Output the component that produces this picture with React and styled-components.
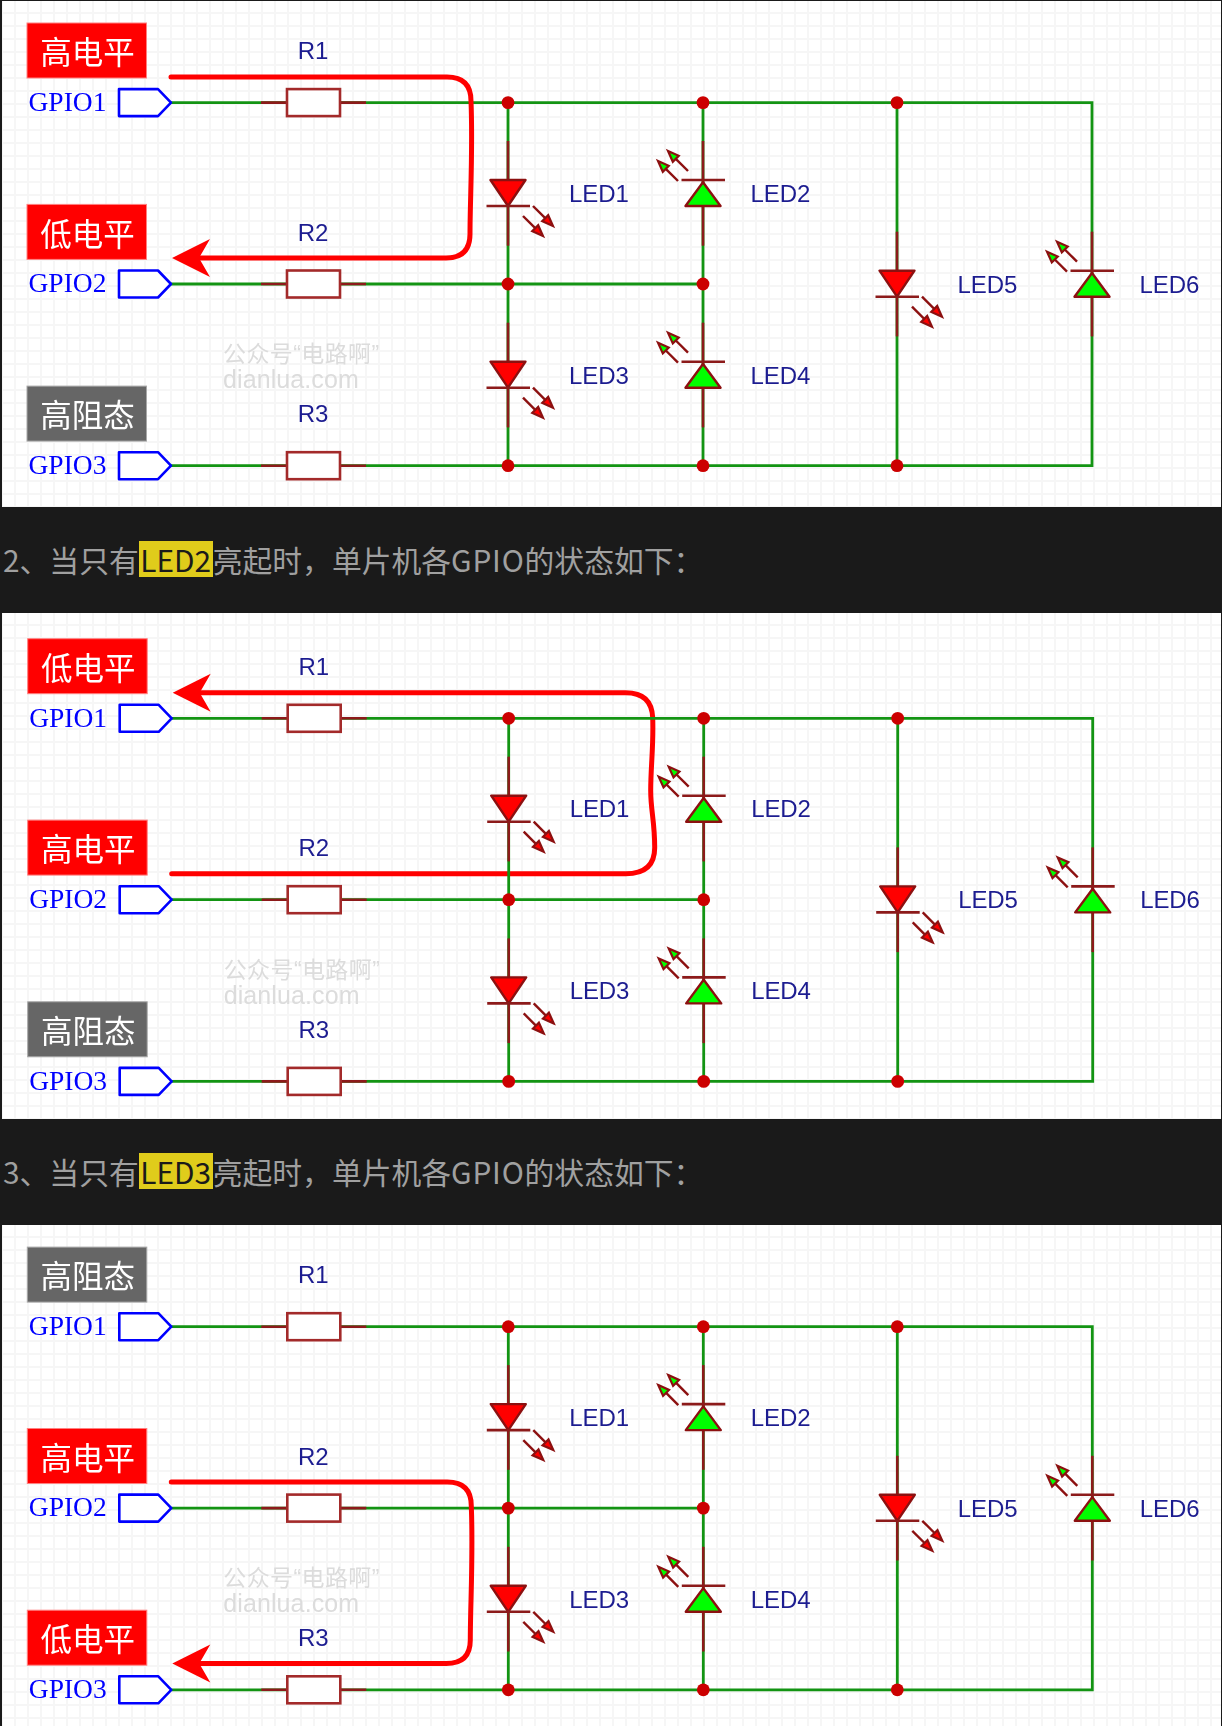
import React from "react";
import styled, { createGlobalStyle } from "styled-components";

const GlobalStyle = createGlobalStyle`
  html, body {
    margin: 0;
    padding: 0;
    background: #1a1a1a;
  }
`;

const Page = styled.div`
  width: 1222px;
  height: 1726px;
  overflow: hidden;
  padding-top: 1px;
  box-sizing: border-box;
  background: #1a1a1a;
`;

const Panel = styled.div`
  height: ${(p) => p.$height}px;
  margin-left: 2px;
  margin-right: 1px;
  background-color: #fff;
  background-image: linear-gradient(#f6f6f6 2px, transparent 2px),
    linear-gradient(90deg, #f6f6f6 2px, transparent 2px);
  background-size: 13px 13px;
  background-position: 12px 11px;
`;

const Sheet = styled.svg`
  display: block;
  width: 100%;
  height: 100%;
  filter: blur(0.35px);
`;

const Caption = styled.div`
  height: 106px;
  box-sizing: border-box;
  display: flex;
  align-items: center;
  padding: 0 0 3px 3px;
  font-family: "Noto Sans CJK SC", sans-serif;
  font-size: 29.8px;
  color: #a0a0a0;
  white-space: nowrap;
`;

const Mark = styled.span`
  display: inline-block;
  width: 74px;
  height: 36px;
  line-height: 36px;
  text-align: center;
  background: #e0cc1b;
  color: #1a1a1a;
`;

const Latin = styled.span`
  letter-spacing: 0.8px;
`;

const Wire = styled.path`
  fill: none;
  stroke: #139413;
  stroke-width: 2.8;
`;

const Lead = styled.path`
  fill: none;
  stroke: #8c1a1a;
  stroke-width: 2.6;
`;

const ResistorBody = styled.rect`
  fill: #fff;
  stroke: #a32a2a;
  stroke-width: 2.6;
`;

const Dot = styled.circle`
  fill: #cc0000;
`;

const Port = styled.path`
  fill: #fff;
  stroke: #0000ff;
  stroke-width: 2.6;
  stroke-linejoin: round;
`;

const Body = styled.polygon`
  fill: ${(p) => (p.$on ? "#ff0000" : "#00ff00")};
  stroke: #8c1010;
  stroke-width: 2.4;
  stroke-linejoin: round;
`;

const Current = styled.path`
  fill: none;
  stroke: #ff0000;
  stroke-width: 5;
  stroke-linecap: round;
`;

const CurrentHead = styled.polygon`
  fill: #ff0000;
`;

const StateBox = styled.rect`
  fill: ${(p) => (p.$kind === "z" ? "#666666" : "#ff0000")};
  stroke: ${(p) => (p.$kind === "z" ? "#a8a8a8" : "#ff8080")};
  stroke-width: 1;
`;

const StateText = styled.text`
  font-family: "Noto Sans CJK SC", sans-serif;
  font-size: 31.5px;
  fill: #fff;
  text-anchor: middle;
`;

const PortText = styled.text`
  font-family: "Liberation Serif", serif;
  font-size: 27.5px;
  fill: #0000ff;
`;

const PartText = styled.text`
  font-family: "Liberation Sans", sans-serif;
  font-size: 24px;
  letter-spacing: -0.1px;
  fill: #1c1c90;
  text-anchor: ${(p) => p.$anchor || "start"};
`;

const Watermark = styled.text`
  font-family: "Liberation Sans", "Noto Sans CJK SC", sans-serif;
  font-size: ${(p) => p.$size}px;
  letter-spacing: ${(p) => p.$spacing}px;
  fill: #dcdcdc;
`;

const ROWS = [102.6, 284, 465.7];
const COLS = [508, 703, 897, 1092];

const LEDS = [
  { name: "LED1", x: 508, y: 193.3, on: true, tx: 61 },
  { name: "LED2", x: 703, y: 193.3, on: false, tx: 47.5 },
  { name: "LED3", x: 508, y: 375, on: true, tx: 61 },
  { name: "LED4", x: 703, y: 375, on: false, tx: 47.5 },
  { name: "LED5", x: 897, y: 284, on: true, tx: 60.5 },
  { name: "LED6", x: 1092, y: 284, on: false, tx: 47.5 },
];

const STATES = {
  high: { text: "高电平", kind: "level" },
  low: { text: "低电平", kind: "level" },
  z: { text: "高阻态", kind: "z" },
};

function LightArrow({ x1, y1, x2, y2, fill }) {
  const len = Math.hypot(x2 - x1, y2 - y1);
  const ux = (x2 - x1) / len;
  const uy = (y2 - y1) / len;
  const bx = x2 - ux * 11;
  const by = y2 - uy * 11;
  const head = `${x2},${y2} ${bx - uy * 4.2},${by + ux * 4.2} ${bx + uy * 4.2},${by - ux * 4.2}`;
  return (
    <g>
      <line x1={x1} y1={y1} x2={bx} y2={by} stroke="#8c1010" strokeWidth="2.4" />
      <polygon points={head} fill={fill} stroke="#8c1010" strokeWidth="2.2" />
    </g>
  );
}

function Led({ name, x, y, on, tx }) {
  const arrows = on
    ? [
        [25, 12.7, 45, 32.7],
        [15, 22.7, 35, 42.7],
      ]
    : [
        [-15, -22.3, -35, -42.3],
        [-25, -12.3, -45, -32.3],
      ];
  const points = on
    ? `${x - 17.5},${y - 13.3} ${x + 17.5},${y - 13.3} ${x},${y + 12.7}`
    : `${x},${y - 11} ${x - 17.5},${y + 12.7} ${x + 17.5},${y + 12.7}`;
  const barY = on ? y + 12.7 : y - 13.3;
  return (
    <g>
      <Lead d={`M${x} ${y - 52.3}V${y + 52.4}`} />
      <Body points={points} $on={on} />
      <Lead d={`M${x - 21.5} ${barY}H${x + 22}`} />
      {arrows.map((a) => (
        <LightArrow
          key={a[0]}
          x1={x + a[0]}
          y1={y + a[1]}
          x2={x + a[2]}
          y2={y + a[3]}
          fill={on ? "#ff0000" : "#00ff00"}
        />
      ))}
      <PartText x={x + tx} y={y + 8.5}>
        {name}
      </PartText>
    </g>
  );
}

function Channel({ index, state, y }) {
  const info = STATES[state];
  return (
    <g>
      <StateBox x="27" y={y - 79.6} width="119.5" height="55" $kind={info.kind} />
      <StateText x="87.5" y={y - 38.5}>
        {info.text}
      </StateText>
      <PortText x="28.5" y={y + 8.3}>{`GPIO${index + 1}`}</PortText>
      <Port d={`M119 ${y - 13.5}H158L171 ${y}L158 ${y + 13.5}H119Z`} />
      <Lead d={`M261 ${y}H366`} />
      <ResistorBody x="287" y={y - 13.5} width="53" height="27" />
      <PartText x="313" y={y - 43.5} $anchor="middle">{`R${index + 1}`}</PartText>
    </g>
  );
}

function Schematic({ states, view, height, current, head, currentBelow }) {
  const path = (
    <g>
      <Current d={current} />
      <CurrentHead points={head} />
    </g>
  );
  return (
    <Sheet viewBox={`${view[0]} ${view[1]} 1219 ${height}`}>
      <Watermark x="223" y="362" $size={23} $spacing={0.4}>
        公众号“电路啊”
      </Watermark>
      <Watermark x="223" y="388" $size={25} $spacing={0.1}>
        dianlua.com
      </Watermark>
      {currentBelow && path}
      <Wire
        d={`M171 ${ROWS[0]}H1092V${ROWS[2]}H171M171 ${ROWS[1]}H703M508 ${ROWS[0]}V${ROWS[2]}M703 ${ROWS[0]}V${ROWS[2]}M897 ${ROWS[0]}V${ROWS[2]}`}
      />
      {LEDS.map((led) => (
        <Led key={led.name} {...led} />
      ))}
      {ROWS.map((y, i) => (
        <Channel key={y} index={i} y={y} state={states[i]} />
      ))}
      {COLS.slice(0, 3).map((x) => (
        <Dot key={x} cx={x} cy={ROWS[0]} r="6.4" />
      ))}
      {COLS.slice(0, 2).map((x) => (
        <Dot key={x} cx={x} cy={ROWS[1]} r="6.4" />
      ))}
      {COLS.slice(0, 3).map((x) => (
        <Dot key={x} cx={x} cy={ROWS[2]} r="6.4" />
      ))}
      {!currentBelow && path}
    </Sheet>
  );
}

export default function App() {
  return (
    <Page>
      <GlobalStyle />
      <Panel $height={506}>
        <Schematic
          states={["high", "low", "z"]}
          view={[2, 1]}
          height={506}
          current="M171 77H447Q471 77 471 101C473 150 470 200 470 234Q470 258 446 258H198"
          head="172,258 210,239 199,258 210,277"
        />
      </Panel>
      <Caption>
        2、当只有<Mark>LED2</Mark>亮起时，单片机各<Latin>GPIO</Latin>的状态如下：
      </Caption>
      <Panel $height={506}>
        <Schematic
          states={["low", "high", "z"]}
          view={[1.3, -2.7]}
          height={506}
          current="M171 258H625Q654 258 654 232C654 205 650 195 650 175C650 150 653 130 652 102Q651 77 625 77H198"
          head="172,77 210,58 199,77 210,96"
          currentBelow
        />
      </Panel>
      <Caption>
        3、当只有<Mark>LED3</Mark>亮起时，单片机各<Latin>GPIO</Latin>的状态如下：
      </Caption>
      <Panel $height={501}>
        <Schematic
          states={["z", "high", "low"]}
          view={[1.7, 0.9]}
          height={501}
          current="M171 258H447Q471 258 471 282C473 331 470 381 470 416Q470 439.5 446 439.5H198"
          head="172,439.5 210,420.5 199,439.5 210,458.5"
        />
      </Panel>
    </Page>
  );
}
